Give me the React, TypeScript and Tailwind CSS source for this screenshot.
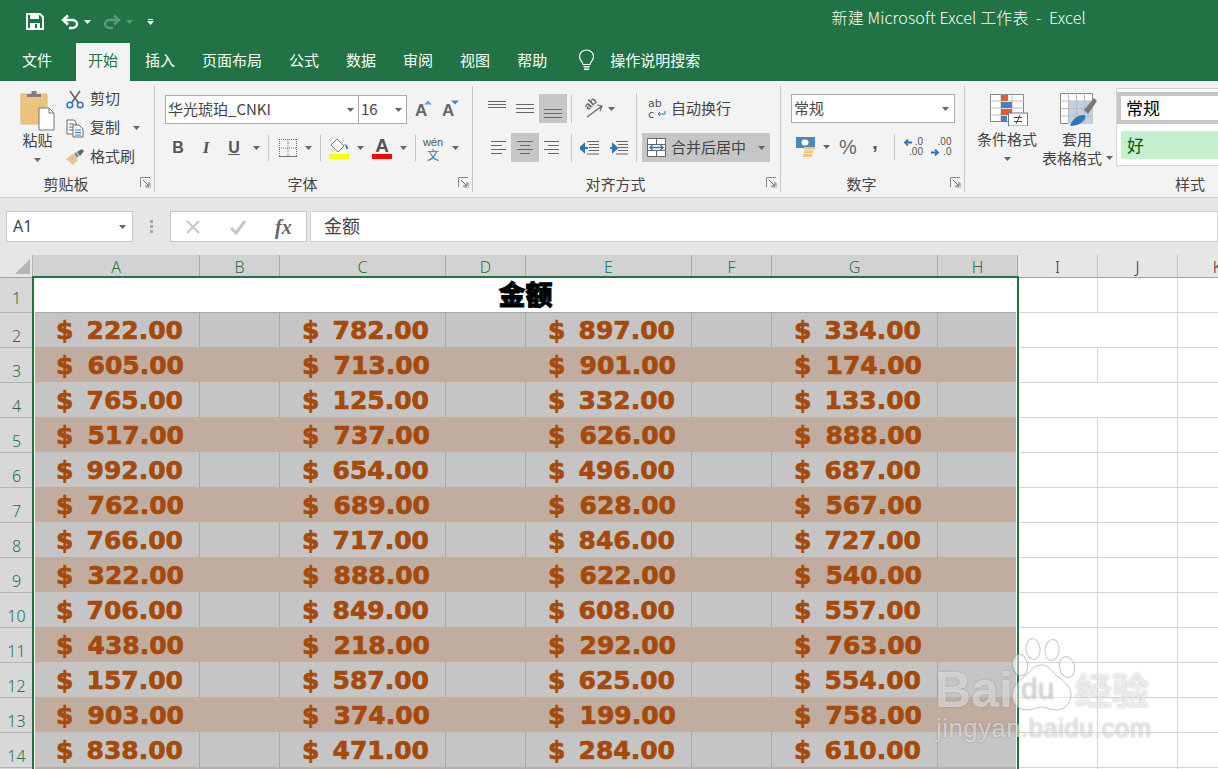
import React from "react";

const Caret = ({ c = "#666" }: { c?: string }) => (
  <svg width="7" height="4" viewBox="0 0 7 4" className="shrink-0"><path d="M0 0h7L3.5 4z" fill={c} /></svg>
);

const Launcher = () => (
  <svg width="11" height="11" viewBox="0 0 11 11" className="absolute right-[3px] bottom-[4px]">
    <path d="M.5 10V.5H10" fill="none" stroke="#8a8a8a" />
    <path d="M3 3l6 6M9 5v4H5" fill="none" stroke="#666" />
    <path d="M10.5 6v4.500H6" fill="none" stroke="#bbb" />
  </svg>
);

const Group = ({ w, label, launcher = true, children }: { w: string; label: string; launcher?: boolean; children: React.ReactNode }) => (
  <div className={`relative flex flex-col shrink-0 ${w}`}>
    <div className="flex-1 min-h-0">{children}</div>
    <div className={`h-[17px] pt-[1px] leading-[16px] text-center text-[15px] text-[#444] ${launcher ? "pr-[22px]" : ""}`}>{label}</div>
    {launcher && <Launcher />}
  </div>
);

const Sep = ({ cls = "h-[28px]" }: { cls?: string }) => <div className={`w-px bg-[#c6c6c6] ${cls}`} />;
const GroupSep = () => <div className="w-px bg-[#c6c6c6] shrink-0" />;

const Lines = ({ ys, x1s, x2s }: { ys: number[]; x1s: number[]; x2s: number[] }) => (
  <svg width="20" height="20" viewBox="0 0 20 20">
    {ys.map((y, i) => (
      <path key={i} d={`M${x1s[i]} ${y + 0.5}H${x2s[i]}`} stroke="#666" />
    ))}
  </svg>
);

const Cell = ({ w, on, children }: { w: string; on?: boolean; children: React.ReactNode }) => (
  <div className={`flex items-center justify-center h-full ${w} ${on ? "bg-[#c6c6c6]" : ""}`}>{children}</div>
);

const Save = () => (
  <svg width="18" height="17" viewBox="0 0 18 17">
    <path d="M1 1h13l3 3v12H1z" fill="none" stroke="#fff" strokeWidth="2" />
    <path d="M4 1h9v5H4z" fill="#fff" />
    <path d="M4 10h10v6H4z" fill="#fff" />
    <path d="M9 11h2v4H9z" fill="#217346" />
  </svg>
);

const Undo = ({ c = "#fff", flip = false }: { c?: string; flip?: boolean }) => (
  <svg width="18" height="16" viewBox="0 0 18 16" className={flip ? "-scale-x-100" : ""}>
    <path d="M7 1.500L2 6l5 4.500" fill="none" stroke={c} strokeWidth="2.500" />
    <path d="M3 6h8c3 0 5 1.800 5 4s-2 4-5 4H8" fill="none" stroke={c} strokeWidth="2.500" />
  </svg>
);

const Bulb = () => (
  <svg width="17" height="23" viewBox="0 0 17 23">
    <path d="M8.500 1C4.500 1 1.500 4 1.500 7.500c0 3.500 3 5 3.500 8h7c.5-3 3.500-4.500 3.500-8C15.500 4 12.500 1 8.500 1z" fill="none" stroke="#fff" strokeWidth="1.200" />
    <path d="M5.500 17h6v1.500h-6zM6 19.500h5V21H6z" fill="#fff" />
  </svg>
);

const Paste = () => (
  <svg width="36" height="41" viewBox="0 0 36 41">
    <path d="M1 4h26v30H1z" fill="#edc47e" stroke="#e3b66d" />
    <path d="M7 7V4h4.500V1h5v3H21v3z" fill="#7f7f7f" />
    <path d="M19 18h10l5 5v17H19z" fill="#fff" stroke="#777" />
    <path d="M29 18v5h5" fill="none" stroke="#777" />
  </svg>
);

const Scissors = () => (
  <svg width="18" height="19" viewBox="0 0 18 19">
    <path d="M4 1l8.500 12M14 1L5.500 13" stroke="#666" strokeWidth="1.600" fill="none" />
    <circle cx="3.800" cy="15" r="2.800" fill="none" stroke="#2f75b5" strokeWidth="1.500" />
    <circle cx="14.200" cy="15" r="2.800" fill="none" stroke="#2f75b5" strokeWidth="1.500" />
  </svg>
);

const Copy = () => (
  <svg width="18" height="19" viewBox="0 0 18 19">
    <path d="M1 1h7l2 2v12H1z" fill="#fff" stroke="#666" />
    <path d="M3 5h5M3 8h4M3 11h4" stroke="#666" />
    <path d="M7 6h6l4 4v8H7z" fill="#fff" stroke="#666" />
    <path d="M9 11h6M9 13.500h6M9 16h6" stroke="#2f75b5" />
  </svg>
);

const Brush = () => (
  <svg width="18" height="16" viewBox="0 0 18 16">
    <path d="M0 10l7-5 5 6-5 5c-2-1-2-3-4-3 0-2-2-1-3-3z" fill="#e8c48a" />
    <path d="M8 5l2-2 3 4-2 2z" fill="#8a8a8a" />
    <path d="M11 3l5-3 2 2-4 5z" fill="#666" />
  </svg>
);

const GrowA = ({ up }: { up: boolean }) => (
  <div className="relative w-[18px] h-[20px]">
    <span className="absolute left-[1px] bottom-0 text-[17px] leading-[18px] font-bold text-[#666] font-['Liberation_Sans',sans-serif]">A</span>
    <svg width="8" height="5" viewBox="0 0 8 5" className="absolute right-0 top-0">
      <path d={up ? "M0 4.500l4-4 4 4z" : "M0 .5h8l-4 4z"} fill={up ? "#6f9fcb" : "#4a86c0"} />
    </svg>
  </div>
);

const Borders = () => (
  <svg width="18" height="18" viewBox="0 0 18 18">
    <path d="M0 .5h18M0 9h18M.5 0v18M9 0v18M17.500 0v18" fill="none" stroke="#777" strokeDasharray="1 1" />
    <path d="M0 17.500h18" stroke="#777" />
  </svg>
);

const Fill = () => (
  <svg width="20" height="21" viewBox="0 0 20 21">
    <path d="M8 1l7 7-6 6-7-7z" fill="#fff" stroke="#777" />
    <path d="M6 3l2-2" stroke="#777" />
    <path d="M15 6c3 0 4 3 4 5-1 0-2 0-2-1 0-2-1-3-2-4z" fill="#2f75b5" />
    <path d="M0 16h20v5H0z" fill="#ffff00" />
  </svg>
);

const FontA = () => (
  <div className="flex flex-col items-center w-[20px] h-[21px]">
    <span className="h-[16px] text-[19px] leading-[16px] font-bold text-[#555] font-['Liberation_Sans',sans-serif]">A</span>
    <div className="w-[20px] h-[5px] bg-[#ff0000]" />
  </div>
);

const Wen = () => (
  <div className="flex flex-col items-center">
    <span className="h-[12px] text-[11px] leading-[12px] text-[#555] font-['Liberation_Sans',sans-serif]">wén</span>
    <span className="h-[13px] text-[12px] leading-[13px] text-[#2f75b5]">文</span>
  </div>
);

const Orient = () => (
  <div className="relative w-[20px] h-[20px]">
    <span className="absolute left-[1px] top-[-2px] -rotate-45 text-[11px] leading-[13px] font-bold text-[#666] font-['Liberation_Sans',sans-serif]">ab</span>
    <svg width="20" height="20" viewBox="0 0 20 20" className="absolute left-0 top-0">
      <path d="M4 18L19 7M14 6l5 1-2 5" fill="none" stroke="#666" strokeWidth="1.200" />
    </svg>
  </div>
);

const Indent = ({ rev }: { rev?: boolean }) => (
  <svg width="19" height="14" viewBox="0 0 19 14">
    <path d="M7 .5h12M9 3.500h10M9 6.500h10M9 9.500h10M7 13h12" stroke="#666" />
    <path d={rev ? "M1 7h5M4 3.500l4 3.500-4 3.500z" : "M3 7h5M4 3.500L0 7l4 3.500z"} stroke="#2f75b5" strokeWidth="2" fill="#2f75b5" />
  </svg>
);

const Merge = () => (
  <svg width="20" height="20" viewBox="0 0 20 20">
    <path d="M.5.500h18v18H.5z" fill="#fff" stroke="#666" />
    <path d="M.5 6.500h18M.5 12.500h18M9.500.5v6M9.500 12.500v6" stroke="#666" />
    <path d="M3 9.500h13M5.500 7l-2.500 2.500L5.500 12M13.500 7l2.500 2.500-2.500 2.500" fill="none" stroke="#2f75b5" strokeWidth="1.400" />
  </svg>
);

const Wrap = () => (
  <div className="relative w-[18px] h-[22px] text-[11px] font-['DejaVu_Sans',sans-serif] text-[#555]">
    <div className="h-[11px] leading-[11px]">ab</div>
    <div className="h-[11px] leading-[11px]">c</div>
    <svg width="9" height="7" viewBox="0 0 9 7" className="absolute left-[9px] top-[13px]">
      <path d="M8 0v3H1M3 1L1 3l2 2" fill="none" stroke="#2f75b5" />
    </svg>
  </div>
);

const Currency = () => (
  <svg width="20" height="20" viewBox="0 0 20 20">
    <path d="M0 0h19v11H0z" fill="#4a86c0" />
    <ellipse cx="9" cy="5.500" rx="3.500" ry="3" fill="#fff" />
    <path d="M8 10h11v2.500H8zM8 13.500h9V16H8zM7 17h9v3H7z" fill="#edc47e" />
  </svg>
);

const Dec = ({ inc }: { inc: boolean }) => (
  <div className="relative w-[21px] h-[20px] text-[10px] font-['Liberation_Sans',sans-serif] text-[#555] text-right">
    <div className="h-[10px] leading-[10px]">{inc ? ".00" : ".0"}</div>
    <div className="h-[10px] leading-[10px]">{inc ? ".0" : ".00"}</div>
    <svg width="9" height="7" viewBox="0 0 9 7" className={`absolute left-0 ${inc ? "top-[12px]" : "top-[2px]"}`}>
      {inc ? <path d="M0 3.500h6M4 .5l3 3-3 3" fill="none" stroke="#2f75b5" strokeWidth="1.800" /> : <path d="M9 3.500H2M5 .5l-3 3 3 3" fill="none" stroke="#2f75b5" strokeWidth="1.800" />}
    </svg>
  </div>
);

const CondFormat = () => (
  <svg width="38" height="32" viewBox="0 0 38 32">
    <path d="M.5.500h33v27H.5z" fill="#fff" stroke="#888" />
    <path d="M11 .5v27M22 .5v27M.5 7h33M.5 14h33M.5 21h33" stroke="#bbb" />
    <path d="M11 1h7v6h-7zM11 15h11v6H11z" fill="#d9603b" />
    <path d="M11 8h11v6H11zM11 22h6v6h-6z" fill="#4a7fb9" />
    <path d="M18.500 19h19v13h-19z" fill="#fff" stroke="#777" />
    <path d="M24 27.500h8M24 23.500h8M30 21l-4 9" stroke="#444" fill="none" />
  </svg>
);

const TableFormat = () => (
  <svg width="38" height="33" viewBox="0 0 38 33">
    <path d="M.5.500h32v30H.5z" fill="#fff" stroke="#888" />
    <path d="M8 8h25v23H8z" fill="#bdd0e6" />
    <path d="M8.500.5v30M16.500.5v30M24.500.5v30M.5 8h32M.5 15.500h32M.5 23h32" stroke="#bbb" />
    <path d="M24 17l10-12 3 3-9 13z" fill="#777" />
    <path d="M10 33c2-6 7-11 13-11 3 0 3 3 1 5-2 3-7 6-14 6z" fill="#2f75b5" />
  </svg>
);

const Paw = () => (
  <svg width="70" height="74" viewBox="0 0 70 74" className="absolute left-[1009px] top-[384px]">
    <g fill="rgba(255,255,255,.45)" stroke="rgba(110,110,110,.4)">
      <ellipse cx="11" cy="27" rx="7.500" ry="11" transform="rotate(-10 11 27)" />
      <ellipse cx="24" cy="11" rx="7" ry="10.500" transform="rotate(-6 24 11)" />
      <ellipse cx="43" cy="12" rx="7" ry="10.500" transform="rotate(6 43 12)" />
      <ellipse cx="58" cy="29" rx="7.500" ry="10.500" transform="rotate(-12 58 29)" />
      <path d="M32 27c8 0 11 7 16 11 5 3 14 10 14 19 0 9-7 15-15 15-6 0-9-3-14-3s-9 3-15 3c-9 0-15-6-15-14 0-10 7-15 13-20 6-4 8-11 16-11z" />
    </g>
  </svg>
);

const fontBase = "font-['Noto_Sans_CJK_SC','Noto_Sans',sans-serif]";

const data: [number, number, number, number][] = [
  [222, 782, 897, 334],
  [605, 713, 901, 174],
  [765, 125, 332, 133],
  [517, 737, 626, 888],
  [992, 654, 496, 687],
  [762, 689, 628, 567],
  [766, 717, 846, 727],
  [322, 888, 622, 540],
  [706, 849, 608, 557],
  [438, 218, 292, 763],
  [157, 587, 625, 554],
  [903, 374, 199, 758],
  [838, 471, 284, 610],
  [0, 0, 0, 0],
];

const COLS = "grid grid-rows-[35px] grid-cols-[33px_167px_80px_166px_80px_166px_80px_166px_80px_80px_80px_80px]";
const num = "font-['DejaVu_Sans',sans-serif] font-bold text-[25px] leading-[30px] text-[#a54a0b] [-webkit-text-stroke:0.7px_#a54a0b]";

const Money = ({ v, first }: { v: number; first?: boolean }) => (
  <div className={`flex items-center justify-between h-[35px] pt-[2px] pr-[16px] ${first ? "pl-[23px]" : "pl-[22px]"} ${num}`}>
    {v > 0 && (
      <>
        <span>$</span>
        <span>{v}.00</span>
      </>
    )}
  </div>
);

const RowHead = ({ n }: { n: number }) => (
  <div className="flex items-end justify-center pb-[1px] bg-[#d8d8d8] border-t border-[#b4b4b4] text-[#217346] text-[16px] leading-[20px] font-['Noto_Sans',sans-serif] font-light">
    {n < 15 ? n : ""}
  </div>
);

const Blanks = ({ noI }: { noI?: boolean }) => (
  <>
    <div className={`border-t border-[#d4d4d4] ${noI ? "" : "border-r"}`} />
    <div className="border-t border-r border-[#d4d4d4]" />
    <div className="border-t border-[#d4d4d4]" />
  </>
);

export default function App() {
  return (
    <div className={`relative w-[1218px] h-[769px] overflow-hidden bg-white ${fontBase} text-[#444]`}>
      {/* title bar */}
      <div className="flex items-center h-[43px] bg-[#217346] text-white pl-[26px]">
        <Save />
        <div className="ml-[17px]"><Undo /></div>
        <div className="ml-[5px]"><Caret c="#fff" /></div>
        <div className="ml-[12px]"><Undo c="#5b9a7a" flip /></div>
        <div className="ml-[5px]"><Caret c="#5b9a7a" /></div>
        <div className="ml-[14px] flex flex-col items-center gap-[1px]">
          <div className="w-[5px] h-px bg-white" />
          <Caret c="#fff" />
        </div>
        <div className="ml-auto mr-[132px] text-[16px] tracking-[.15px] font-light whitespace-pre -mt-[9px]">新建 Microsoft Excel 工作表  -  Excel</div>
      </div>
      {/* tabs */}
      <div className="flex items-center h-[38px] pb-[3px] bg-[#217346] text-white text-[15px] pl-[22px] gap-[27px]">
        <span className="mr-[9px]">文件</span>
        <span className="self-stretch flex items-center px-[12px] -mx-[12px] -mb-[3px] pb-[3px] bg-[#f3f3f3] text-[#217346]">开始</span>
        <span>插入</span>
        <span>页面布局</span>
        <span>公式</span>
        <span>数据</span>
        <span>审阅</span>
        <span>视图</span>
        <span>帮助</span>
        <div className="flex items-center ml-[4px] gap-[15px]">
          <Bulb />
          <span>操作说明搜索</span>
        </div>
      </div>
      {/* ribbon */}
      <div className="flex h-[117px] py-[5px] bg-[#f3f3f3] border-b border-[#d2d2d2] text-[15px] overflow-hidden">
        <Group w="w-[154px]" label="剪贴板">
          <div className="flex pl-[17px]">
            <div className="flex flex-col items-center w-[41px] pt-[4px]">
              <Paste />
              <div className="leading-[18px]">粘贴</div>
              <div className="mt-[9px]"><Caret /></div>
            </div>
            <div className="flex flex-col gap-[5px] pt-[1px] ml-[8px] w-[88px]">
              <div className="flex items-center h-[24px] gap-[6px]"><Scissors /><span className="-mt-[1px]">剪切</span></div>
              <div className="flex items-center h-[24px] gap-[6px]"><Copy /><span className="-mt-[1px]">复制</span><span className="ml-[7px]"><Caret /></span></div>
              <div className="flex items-center h-[24px] gap-[6px]"><Brush /><span className="-mt-[1px]">格式刷</span></div>
            </div>
          </div>
        </Group>
        <GroupSep />
        <Group w="w-[317px]" label="字体">
          <div className="pl-[10px] pt-[9px]">
            <div className="flex items-center h-[29px]">
              <div className="flex items-center justify-between w-[194px] h-full bg-white border border-[#ababab] pl-[2px] pr-[4px]">
                <span className="-mt-[1px]">华光琥珀_CNKI</span><Caret />
              </div>
              <div className="flex items-center justify-between w-[49px] h-full -ml-px bg-white border border-[#ababab] pl-[2px] pr-[4px]">
                <span className="-mt-[1px]">16</span><Caret />
              </div>
              <div className="ml-[7px]"><GrowA up /></div>
              <div className="ml-[9px]"><GrowA up={false} /></div>
            </div>
            <div className="flex items-center h-[24px] mt-[12px] text-[#555]">
              <Cell w="w-[26px]"><span className="font-['Liberation_Sans',sans-serif] font-bold text-[16px]">B</span></Cell>
              <Cell w="w-[30px]"><span className="font-['Liberation_Serif',serif] font-bold italic text-[17px]">I</span></Cell>
              <Cell w="w-[26px]"><span className="font-['Liberation_Sans',sans-serif] font-bold text-[16px] underline">U</span></Cell>
              <Cell w="w-[18px]"><Caret /></Cell>
              <Cell w="w-[6px]"><Sep cls="h-[26px]" /></Cell>
              <Cell w="w-[34px]"><Borders /></Cell>
              <Cell w="w-[6px]"><Caret /></Cell>
              <Cell w="w-[18px]"><Sep cls="h-[26px]" /></Cell>
              <Cell w="w-[20px]"><Fill /></Cell>
              <Cell w="w-[22px]"><Caret /></Cell>
              <Cell w="w-[22px]"><FontA /></Cell>
              <Cell w="w-[20px]"><Caret /></Cell>
              <Cell w="w-[4px]"><Sep cls="h-[26px]" /></Cell>
              <Cell w="w-[32px]"><Wen /></Cell>
              <Cell w="w-[12px]"><Caret /></Cell>
            </div>
          </div>
        </Group>
        <GroupSep />
        <Group w="w-[307px]" label="对齐方式">
          <div className="flex pl-[10px] pt-[8px]">
            <div>
              <div className="flex items-center h-[29px]">
                <Cell w="w-[28px]"><Lines ys={[2, 5, 8]} x1s={[1, 1, 1]} x2s={[19, 19, 19]} /></Cell>
                <Cell w="w-[28px]"><Lines ys={[5, 9, 13]} x1s={[1, 1, 1]} x2s={[19, 19, 19]} /></Cell>
                <Cell w="w-[28px]" on><Lines ys={[10, 14, 18]} x1s={[1, 1, 1]} x2s={[19, 19, 19]} /></Cell>
                <Cell w="w-[8px]"><Sep /></Cell>
                <div className="flex items-center pl-[8px] gap-[5px]"><Orient /><Caret /></div>
              </div>
              <div className="flex items-center h-[29px] mt-[10px]">
                <Cell w="w-[28px]"><Lines ys={[3, 7, 11, 15]} x1s={[4, 4, 4, 4]} x2s={[19, 15, 19, 15]} /></Cell>
                <Cell w="w-[28px]" on><Lines ys={[3, 7, 11, 15]} x1s={[2, 5, 2, 5]} x2s={[18, 15, 18, 15]} /></Cell>
                <Cell w="w-[28px]"><Lines ys={[3, 7, 11, 15]} x1s={[1, 5, 1, 5]} x2s={[16, 16, 16, 16]} /></Cell>
                <Cell w="w-[8px]"><Sep /></Cell>
                <Cell w="w-[29px]"><Indent /></Cell>
                <Cell w="w-[28px]"><Indent rev /></Cell>
              </div>
            </div>
            <div className="flex justify-center w-[9px]"><Sep cls="h-[69px] mt-[-1px]" /></div>
            <div className="ml-[1px]">
              <div className="flex items-center h-[29px] pl-[6px] gap-[5px]"><Wrap /><span className="-mt-[1px]">自动换行</span></div>
              <div className="flex items-center h-[29px] mt-[10px] w-[128px] pl-[5px] pr-[5px] bg-[#c6c6c6] gap-[4px]">
                <Merge /><span>合并后居中</span><span className="ml-auto"><Caret /></span>
              </div>
            </div>
          </div>
        </Group>
        <GroupSep />
        <Group w="w-[183px]" label="数字">
          <div className="pl-[10px] pt-[8px]">
            <div className="flex items-center justify-between w-[164px] h-[29px] bg-white border border-[#ababab] pl-[2px] pr-[5px]">
              <span>常规</span><Caret />
            </div>
            <div className="flex items-center h-[24px] mt-[12px]">
              <Cell w="w-[30px]"><Currency /></Cell>
              <Cell w="w-[10px]"><Caret /></Cell>
              <Cell w="w-[34px]"><span className="text-[20px] text-[#666] font-['Liberation_Sans',sans-serif]">%</span></Cell>
              <Cell w="w-[20px]"><span className="text-[20px] leading-[20px] font-bold text-[#555] font-['Liberation_Sans',sans-serif] -mt-[10px]">,</span></Cell>
              <Cell w="w-[18px]"><Sep cls="h-[26px]" /></Cell>
              <Cell w="w-[20px]"><Dec inc={false} /></Cell>
              <Cell w="w-[36px]"><Dec inc /></Cell>
            </div>
          </div>
        </Group>
        <GroupSep />
        <Group w="w-[450px]" label="样式" launcher={false}>
          <div className="flex pl-[12px]">
            <div className="flex flex-col items-center w-[60px] pt-[7px]">
              <div className="h-[36px] pl-[13px] pt-[1px] self-start"><CondFormat /></div>
              <div className="h-[19px] leading-[19px] whitespace-nowrap">条件格式</div>
              <div className="mt-[9px]"><Caret /></div>
            </div>
            <div className="flex flex-col ml-[5px] w-[74px] pt-[7px]">
              <div className="h-[36px] pl-[18px]"><TableFormat /></div>
              <div className="h-[19px] leading-[19px] w-[70px] text-center">套用</div>
              <div className="flex items-center h-[20px] gap-[4px] whitespace-nowrap">表格格式<Caret /></div>
            </div>
            <div className="mt-[2px] w-[200px] h-[78px] bg-white border border-[#d4d4d4] pt-[3px] pl-0 shrink-0">
              <div className="flex items-center h-[32px] border-[4px] border-r-0 border-[#c6c6c6] bg-white pl-[5px] text-[17px] text-black">常规</div>
              <div className="flex items-center h-[28px] mt-[7px] ml-[4px] bg-[#c6efce] pl-[6px] text-[17px] text-[#006100]">好</div>
            </div>
          </div>
        </Group>
      </div>
      {/* formula bar */}
      <div className="h-[57px] pt-[13px] bg-[#e6e6e6]">
        <div className="flex h-[31px] pl-[6px]">
          <div className="flex items-center justify-between w-[127px] bg-white border border-[#c6c6c6] pl-[6px] pr-[6px] text-[16px] font-['Noto_Sans',sans-serif]">
            <span className="-mt-[1px]">A1</span><Caret />
          </div>
          <div className="flex flex-col items-center justify-center gap-[2px] w-[37px]">
            <div className="w-[3px] h-[3px] bg-[#a6a6a6]" />
            <div className="w-[3px] h-[3px] bg-[#a6a6a6]" />
            <div className="w-[3px] h-[3px] bg-[#a6a6a6]" />
          </div>
          <div className="flex items-center w-[137px] bg-white border border-[#c6c6c6] pl-[14px]">
            <svg width="16" height="16" viewBox="0 0 16 16"><path d="M2 2l12 12M14 2L2 14" stroke="#c6c6c6" strokeWidth="2" /></svg>
            <svg width="18" height="16" viewBox="0 0 18 16" className="ml-[28px]"><path d="M2 9l5 5 9-12" fill="none" stroke="#c6c6c6" strokeWidth="3" /></svg>
            <span className="ml-[28px] font-['Liberation_Serif',serif] italic font-bold text-[20px] leading-[20px] text-[#666]">fx</span>
          </div>
          <div className="flex-1 ml-[3px] flex items-center bg-white border border-[#d4d4d4] pl-[13px] text-[18px]"><span className="-mt-[3px]">金额</span></div>
        </div>
      </div>
      {/* sheet */}
      <div className="relative">
        <div className="grid grid-cols-[33px_167px_80px_166px_80px_166px_80px_166px_80px_80px_80px_80px] h-[22px] bg-[#e6e6e6] text-[16px] leading-[20px] font-['Noto_Sans',sans-serif] font-light">
          <div className="relative border-r border-[#b4b4b4]">
            <svg width="15" height="15" viewBox="0 0 15 15" className="absolute left-[15px] top-[4px]"><path d="M15 0v15H0z" fill="#b5b5b5" /></svg>
          </div>
          {"ABCDEFGH".split("").map((c) => (
            <div key={c} className="flex justify-center items-end bg-[#d2d2d2] border-r border-[#ababab] text-[#217346]">{c}</div>
          ))}
          {"IJK".split("").map((c) => (
            <div key={c} className="flex justify-center items-end border-r border-[#c0c0c0] text-[#333]">{c}</div>
          ))}
        </div>
        <div className={`${COLS} h-[35px]`}>
          <div className="flex items-end justify-center pb-[4px] bg-[#d8d8d8] border-t border-[#a0a0a0] text-[#217346] text-[16px] leading-[20px] font-['Noto_Sans',sans-serif] font-light">1</div>
          <div className="col-span-8 flex items-center justify-center bg-white border-t border-[#a0a0a0] text-black font-black text-[27px] leading-[30px] [-webkit-text-stroke:0.8px_#000] pb-[3px]">金额</div>
          <div className="border-t border-r border-t-[#a0a0a0] border-r-[#d4d4d4]" />
          <div className="border-t border-r border-t-[#a0a0a0] border-r-[#d4d4d4]" />
          <div className="border-t border-t-[#a0a0a0]" />
        </div>
        {data.map((r, i) => {
          const tan = i % 2 === 1;
          const bg = tan ? "bg-[#c1ada0]" : "bg-[#c5c5c5]";
          const line = tan ? "" : "border-r border-[#a9a9a9]";
          const top = i === 0 ? "shadow-[inset_0_1px_0_#a9a9a9]" : "";
          return (
            <div key={i} className={`${COLS} h-[35px]`}>
              <RowHead n={i + 2} />
              <div className={`col-span-8 ${bg} ${top} grid grid-rows-[35px] grid-cols-[167px_80px_166px_80px_166px_80px_166px_80px]`}>
                <div className={line}><Money v={r[0]} first /></div>
                <div className={line} />
                <div className={line}><Money v={r[1]} /></div>
                <div className={line} />
                <div className={line}><Money v={r[2]} /></div>
                <div className={line} />
                <div className={line}><Money v={r[3]} /></div>
                <div />
              </div>
              <Blanks noI={i === 0 || i === 2} />
            </div>
          );
        })}
        {/* selection */}
        <div className="absolute left-[32px] top-[21px] w-[987px] h-[600px] border-2 border-[#217346] shadow-[inset_0_0_0_1px_#fff]" />
      </div>
      {/* watermark */}
      <div className="absolute left-0 top-[254px] w-full h-[515px] pointer-events-none">
        <Paw />
        <div className="absolute left-[935px] top-[406px] text-[50px] leading-[60px] font-bold font-['Liberation_Sans',sans-serif] text-white/55 [text-shadow:0_0_2px_rgba(90,90,90,.45)]">Bai</div>
        <div className="absolute left-[1021px] top-[418px] text-[30px] leading-[34px] font-['Liberation_Sans',sans-serif] text-white/40 [text-shadow:0_0_2px_rgba(90,90,90,.5)]">du</div>
        <div className="absolute left-[1075px] top-[410px] text-[37px] leading-[50px] font-bold text-white/70 [text-shadow:0_0_2px_rgba(90,90,90,.45)]">经验</div>
        <div className="absolute left-[936px] top-[457px] text-[25.5px] leading-[34px] tracking-[.6px] font-['Liberation_Sans',sans-serif] text-white/55 [text-shadow:0_0_2px_rgba(90,90,90,.5)]">jingyan.baidu.com</div>
      </div>
    </div>
  );
}
